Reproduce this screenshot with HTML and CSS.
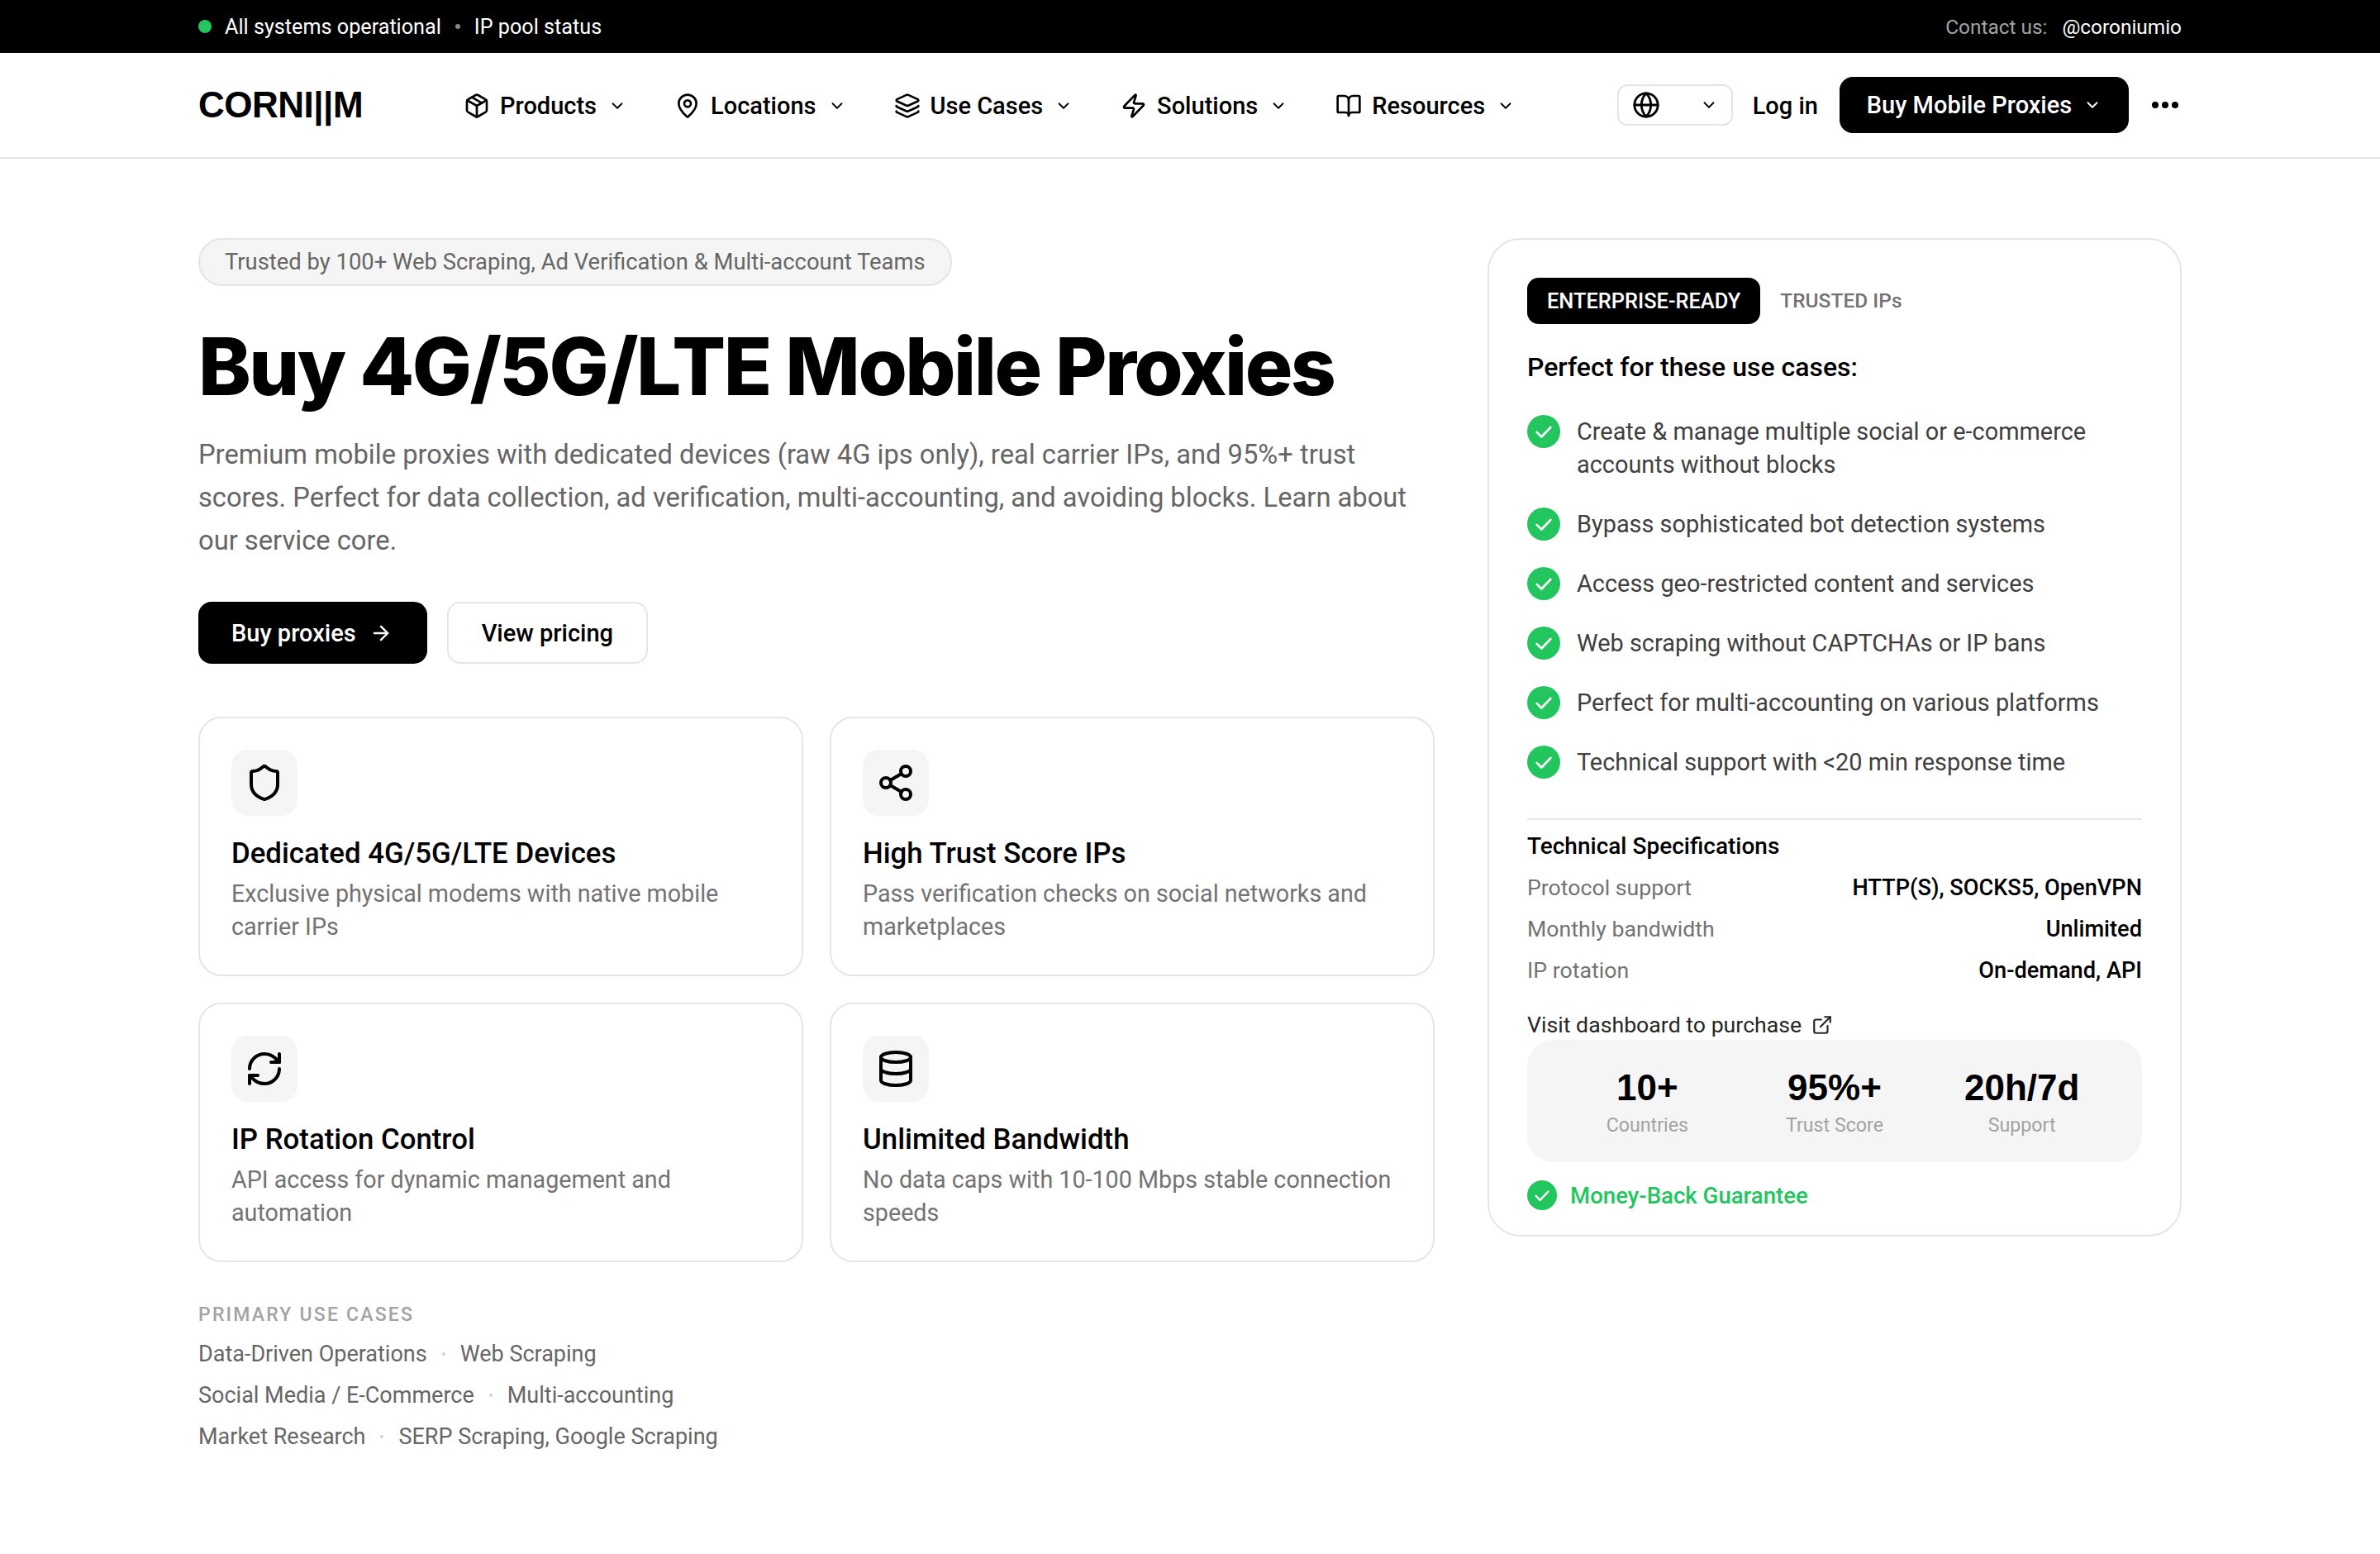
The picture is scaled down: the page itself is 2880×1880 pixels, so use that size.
FILE: index.html
```html
<!DOCTYPE html>
<html lang="en">
<head>
    <meta charset="UTF-8">
    <meta name="viewport" content="width=device-width, initial-scale=1.0">
    <title>Buy 4G/5G/LTE Mobile Proxies</title>
    <link rel="stylesheet" href="styles.css">
</head>
<body>
    <svg class="sprite" xmlns="http://www.w3.org/2000/svg">
        <symbol id="i-chevron" viewBox="0 0 24 24"><path d="m6 9 6 6 6-6"/></symbol>
        <symbol id="i-package" viewBox="0 0 24 24"><path d="M11 21.73a2 2 0 0 0 2 0l7-4A2 2 0 0 0 21 16V8a2 2 0 0 0-1-1.73l-7-4a2 2 0 0 0-2 0l-7 4A2 2 0 0 0 3 8v8a2 2 0 0 0 1 1.73z"/><path d="M12 22V12"/><path d="m3.3 7 8.7 5 8.7-5"/><path d="m7.5 4.27 9 5.15"/></symbol>
        <symbol id="i-pin" viewBox="0 0 24 24"><path d="M20 10c0 4.99-5.54 10.19-7.4 11.8a1 1 0 0 1-1.2 0C9.54 20.19 4 14.99 4 10a8 8 0 0 1 16 0"/><circle cx="12" cy="10" r="3"/></symbol>
        <symbol id="i-layers" viewBox="0 0 24 24"><path d="M12.83 2.18a2 2 0 0 0-1.66 0L2.6 6.08a1 1 0 0 0 0 1.83l8.58 3.91a2 2 0 0 0 1.66 0l8.58-3.9a1 1 0 0 0 0-1.83z"/><path d="M2 12a1 1 0 0 0 .58.91l8.6 3.91a2 2 0 0 0 1.65 0l8.58-3.9A1 1 0 0 0 22 12"/><path d="M2 17a1 1 0 0 0 .58.91l8.6 3.91a2 2 0 0 0 1.65 0l8.58-3.9A1 1 0 0 0 22 17"/></symbol>
        <symbol id="i-zap" viewBox="0 0 24 24"><path d="M4 14a1 1 0 0 1-.78-1.63l9.9-10.2a.5.5 0 0 1 .86.46l-1.92 6.02A1 1 0 0 0 13 10h7a1 1 0 0 1 .78 1.63l-9.9 10.2a.5.5 0 0 1-.86-.46l1.92-6.02A1 1 0 0 0 11 14z"/></symbol>
        <symbol id="i-book" viewBox="0 0 24 24"><path d="M12 7v14"/><path d="M3 18a1 1 0 0 1-1-1V4a1 1 0 0 1 1-1h5a4 4 0 0 1 4 4 4 4 0 0 1 4-4h5a1 1 0 0 1 1 1v13a1 1 0 0 1-1 1h-6a3 3 0 0 0-3 3 3 3 0 0 0-3-3z"/></symbol>
        <symbol id="i-globe" viewBox="0 0 24 24"><circle cx="12" cy="12" r="10"/><path d="M12 2a14.5 14.5 0 0 0 0 20 14.5 14.5 0 0 0 0-20"/><path d="M2 12h20"/></symbol>
        <symbol id="i-arrow" viewBox="0 0 24 24"><path d="M5 12h14"/><path d="m12 5 7 7-7 7"/></symbol>
        <symbol id="i-shield" viewBox="0 0 24 24"><path d="M20 13c0 5-3.5 7.5-7.66 8.95a1 1 0 0 1-.67-.01C7.5 20.5 4 18 4 13V6a1 1 0 0 1 1-1c2 0 4.5-1.2 6.24-2.72a1.17 1.17 0 0 1 1.52 0C14.51 3.81 17 5 19 5a1 1 0 0 1 1 1z"/></symbol>
        <symbol id="i-share" viewBox="0 0 24 24"><circle cx="18" cy="5" r="3"/><circle cx="6" cy="12" r="3"/><circle cx="18" cy="19" r="3"/><path d="m8.59 13.51 6.83 3.98"/><path d="m15.41 6.51-6.82 3.98"/></symbol>
        <symbol id="i-refresh" viewBox="0 0 24 24"><path d="M3 12a9 9 0 0 1 9-9 9.75 9.75 0 0 1 6.74 2.74L21 8"/><path d="M21 3v5h-5"/><path d="M21 12a9 9 0 0 1-9 9 9.75 9.75 0 0 1-6.74-2.74L3 16"/><path d="M8 16H3v5"/></symbol>
        <symbol id="i-database" viewBox="0 0 24 24"><ellipse cx="12" cy="5" rx="9" ry="3"/><path d="M3 5v14a9 3 0 0 0 18 0V5"/><path d="M3 12a9 3 0 0 0 18 0"/></symbol>
        <symbol id="i-external" viewBox="0 0 24 24"><path d="M15 3h6v6"/><path d="M10 14 21 3"/><path d="M18 13v6a2 2 0 0 1-2 2H5a2 2 0 0 1-2-2V8a2 2 0 0 1 2-2h6"/></symbol>
        <symbol id="i-check" viewBox="0 0 24 24"><circle class="check-bg" cx="12" cy="12" r="12"/><path class="check-mark" d="m7 12.5 3.4 3.4L17 9"/></symbol>
    </svg>

    <div class="topbar">
        <div class="wrap topbar-row">
            <div class="status">
                <span class="status-dot"></span>
                <span>All systems operational</span>
                <span class="status-sep"></span>
                <span>IP pool status</span>
            </div>
            <div class="contact"><span class="contact-label">Contact us:</span><span>@coroniumio</span></div>
        </div>
    </div>

    <header class="nav">
        <div class="wrap nav-row">
            <a class="logo">CORNI||M</a>
            <nav class="menu">
                <a class="menu-item"><svg class="icon"><use href="#i-package"/></svg>Products<svg class="chev"><use href="#i-chevron"/></svg></a>
                <a class="menu-item"><svg class="icon"><use href="#i-pin"/></svg>Locations<svg class="chev"><use href="#i-chevron"/></svg></a>
                <a class="menu-item"><svg class="icon"><use href="#i-layers"/></svg>Use Cases<svg class="chev"><use href="#i-chevron"/></svg></a>
                <a class="menu-item"><svg class="icon"><use href="#i-zap"/></svg>Solutions<svg class="chev"><use href="#i-chevron"/></svg></a>
                <a class="menu-item"><svg class="icon"><use href="#i-book"/></svg>Resources<svg class="chev"><use href="#i-chevron"/></svg></a>
            </nav>
            <div class="nav-right">
                <div class="lang"><svg class="icon"><use href="#i-globe"/></svg><svg class="chev"><use href="#i-chevron"/></svg></div>
                <a class="login">Log in</a>
                <a class="buy-btn">Buy Mobile Proxies<svg class="chev"><use href="#i-chevron"/></svg></a>
                <div class="dots"><span></span><span></span><span></span></div>
            </div>
        </div>
    </header>

    <main class="wrap layout">
        <section class="hero">
            <div class="badge">Trusted by 100+ Web Scraping, Ad Verification &amp; Multi-account Teams</div>
            <h1>Buy 4G/5G/LTE Mobile Proxies</h1>
            <p class="lead">Premium mobile proxies with dedicated devices (raw 4G ips only), real carrier IPs, and 95%+ trust scores. Perfect for data collection, ad verification, multi-accounting, and avoiding blocks. Learn about our service core.</p>
            <div class="actions">
                <a class="btn btn-dark">Buy proxies<svg class="btn-arrow"><use href="#i-arrow"/></svg></a>
                <a class="btn btn-light">View pricing</a>
            </div>

            <div class="features">
                <article class="feature">
                    <div class="feature-icon"><svg><use href="#i-shield"/></svg></div>
                    <h3>Dedicated 4G/5G/LTE Devices</h3>
                    <p>Exclusive physical modems with native mobile carrier IPs</p>
                </article>
                <article class="feature">
                    <div class="feature-icon"><svg><use href="#i-share"/></svg></div>
                    <h3>High Trust Score IPs</h3>
                    <p>Pass verification checks on social networks and marketplaces</p>
                </article>
                <article class="feature">
                    <div class="feature-icon"><svg><use href="#i-refresh"/></svg></div>
                    <h3>IP Rotation Control</h3>
                    <p>API access for dynamic management and automation</p>
                </article>
                <article class="feature">
                    <div class="feature-icon"><svg><use href="#i-database"/></svg></div>
                    <h3>Unlimited Bandwidth</h3>
                    <p>No data caps with 10-100 Mbps stable connection speeds</p>
                </article>
            </div>

            <div class="primary">
                <div class="primary-title">PRIMARY USE CASES</div>
                <div class="primary-row"><span>Data-Driven Operations</span><i></i><span>Web Scraping</span></div>
                <div class="primary-row"><span>Social Media / E-Commerce</span><i></i><span>Multi-accounting</span></div>
                <div class="primary-row"><span>Market Research</span><i></i><span>SERP Scraping, Google Scraping</span></div>
            </div>
        </section>

        <aside class="panel">
            <div class="tabs">
                <span class="tab tab-active">ENTERPRISE-READY</span>
                <span class="tab">TRUSTED IPs</span>
            </div>
            <h2>Perfect for these use cases:</h2>
            <ul class="checks">
                <li><svg class="check"><use href="#i-check"/></svg><span>Create &amp; manage multiple social or e-commerce accounts without blocks</span></li>
                <li><svg class="check"><use href="#i-check"/></svg><span>Bypass sophisticated bot detection systems</span></li>
                <li><svg class="check"><use href="#i-check"/></svg><span>Access geo-restricted content and services</span></li>
                <li><svg class="check"><use href="#i-check"/></svg><span>Web scraping without CAPTCHAs or IP bans</span></li>
                <li><svg class="check"><use href="#i-check"/></svg><span>Perfect for multi-accounting on various platforms</span></li>
                <li><svg class="check"><use href="#i-check"/></svg><span>Technical support with &lt;20 min response time</span></li>
            </ul>
            <div class="specs">
                <h4>Technical Specifications</h4>
                <div class="spec"><span>Protocol support</span><strong>HTTP(S), SOCKS5, OpenVPN</strong></div>
                <div class="spec"><span>Monthly bandwidth</span><strong>Unlimited</strong></div>
                <div class="spec"><span>IP rotation</span><strong>On-demand, API</strong></div>
            </div>
            <a class="dash-link">Visit dashboard to purchase<svg><use href="#i-external"/></svg></a>
            <div class="stats">
                <div class="stat"><b>10+</b><span>Countries</span></div>
                <div class="stat"><b>95%+</b><span>Trust Score</span></div>
                <div class="stat"><b>20h/7d</b><span>Support</span></div>
            </div>
            <div class="guarantee"><svg class="check"><use href="#i-check"/></svg>Money-Back Guarantee</div>
        </aside>
    </main>
</body>
</html>
```

FILE: styles.css
```css
* {
    box-sizing: border-box;
}

body {
    margin: 0;
    font-family: Roboto, "Liberation Sans", sans-serif;
    color: #000;
    background: #fff;
}

.sprite {
    display: none;
}

svg {
    fill: none;
    stroke: currentColor;
    stroke-linecap: round;
    stroke-linejoin: round;
    stroke-width: 2;
}

.wrap {
    width: 2400px;
    margin: 0 auto;
}

/* top strip */
.topbar {
    height: 64px;
    background: #000;
    color: #fff;
    font-size: 25.2px;
}

.topbar-row {
    height: 100%;
    display: flex;
    align-items: center;
    justify-content: space-between;
}

.status {
    display: flex;
    align-items: center;
}

.status-dot {
    width: 16px;
    height: 16px;
    margin-right: 16px;
    border-radius: 50%;
    background: #22c55e;
}

.status-sep {
    width: 6px;
    height: 6px;
    margin: 0 17px;
    border-radius: 50%;
    background: #8a8a8a;
}

.contact {
    font-size: 24.4px;
}

.contact-label {
    margin-right: 18px;
    color: #a3a3a3;
}

/* main nav */
.nav {
    height: 128px;
    border-bottom: 2px solid #e5e5e5;
}

.nav-row {
    height: 100%;
    display: flex;
    align-items: center;
}

.logo {
    width: 321px;
    font-family: "Liberation Sans", sans-serif;
    font-size: 44px;
    font-weight: 700;
    letter-spacing: -0.5px;
}

.menu {
    margin-top: 2px;
    display: flex;
    gap: 58px;
}

.menu-item {
    display: flex;
    align-items: center;
    font-size: 29px;
    font-weight: 500;
    white-space: nowrap;
}

.icon {
    width: 32px;
    height: 32px;
    margin-right: 12px;
}

.chev {
    width: 22px;
    height: 22px;
    margin-left: 14px;
}

.nav-right {
    margin-left: auto;
    margin-right: 4px;
    display: flex;
    align-items: center;
}

.lang {
    width: 140px;
    height: 50px;
    padding: 0 16px;
    display: flex;
    align-items: center;
    justify-content: space-between;
    border: 2px solid #e5e5e5;
    border-radius: 12px;
}

.lang .icon {
    width: 34px;
    height: 34px;
    margin: 0;
}

.lang .chev {
    margin: 0;
}

.login {
    margin: 2px 26px 0 24px;
    font-size: 29px;
    font-weight: 500;
}

.buy-btn {
    width: 350px;
    height: 68px;
    display: flex;
    align-items: center;
    justify-content: center;
    background: #000;
    color: #fff;
    border-radius: 16px;
    font-size: 29px;
    font-weight: 500;
}

.dots {
    margin-left: 28px;
    width: 32px;
    display: flex;
    justify-content: space-between;
}

.dots span {
    width: 8px;
    height: 8px;
    border-radius: 50%;
    background: #000;
}

/* page layout */
.layout {
    display: grid;
    grid-template-columns: 1496px 840px;
    gap: 64px;
    align-items: start;
    padding-top: 96px;
}

.badge {
    display: inline-block;
    height: 58px;
    padding: 0 30px;
    line-height: 54px;
    border: 2px solid #e5e5e5;
    border-radius: 29px;
    background: #f5f5f5;
    color: #666;
    font-size: 27.4px;
}

h1 {
    margin: 41px 0 0;
    font-family: Inter, "Liberation Sans", sans-serif;
    font-size: 96px;
    line-height: 112px;
    font-weight: 800;
    letter-spacing: -2.5px;
}

.lead {
    margin: 25px 0 0;
    font-size: 32.7px;
    line-height: 52px;
    color: #666;
}

.actions {
    margin-top: 48px;
    display: flex;
    gap: 24px;
}

.btn {
    height: 75px;
    padding: 0 40px;
    display: flex;
    align-items: center;
    border-radius: 16px;
    font-size: 29px;
    font-weight: 500;
}

.btn-dark {
    padding-right: 42px;
    background: #000;
    color: #fff;
}

.btn-arrow {
    width: 28px;
    height: 28px;
    margin-left: 16px;
}

.btn-light {
    border: 2px solid #e5e5e5;
}

/* feature cards */
.features {
    margin-top: 64px;
    display: grid;
    grid-template-columns: 1fr 1fr;
    gap: 32px;
}

.feature {
    height: 314px;
    padding: 38px;
    border: 2px solid #e5e5e5;
    border-radius: 28px;
}

.feature-icon {
    width: 80px;
    height: 80px;
    display: flex;
    align-items: center;
    justify-content: center;
    background: #f5f5f5;
    border-radius: 20px;
}

.feature-icon svg {
    width: 48px;
    height: 48px;
}

.feature h3 {
    margin: 23px 0 0;
    font-size: 34.8px;
    line-height: 44px;
    font-weight: 500;
}

.feature p {
    margin: 7px 0 0;
    font-size: 28.7px;
    line-height: 40px;
    color: #737373;
}

/* use case list under the cards */
.primary {
    margin-top: 50px;
}

.primary-title {
    font-size: 23px;
    line-height: 28px;
    font-weight: 500;
    letter-spacing: 2.2px;
    color: #a3a3a3;
}

.primary-row {
    margin-top: 16px;
    height: 34px;
    display: flex;
    align-items: center;
    font-size: 27px;
    color: #666;
}

.primary-row i {
    width: 4px;
    height: 4px;
    margin: 0 18px;
    border-radius: 50%;
    background: #d4d4d4;
}

/* right panel */
.panel {
    padding: 46px 46px 30px;
    border: 2px solid #e5e5e5;
    border-radius: 40px;
}

.tabs {
    display: flex;
    align-items: center;
}

.tab {
    height: 56px;
    padding: 0 24px;
    line-height: 56px;
    font-size: 24.5px;
    font-weight: 500;
    color: #737373;
}

.tab-active {
    background: #000;
    color: #fff;
    border-radius: 14px;
    font-size: 25.4px;
}

.panel h2 {
    margin: 32px 0 0;
    font-size: 32px;
    line-height: 40px;
    font-weight: 500;
}

.checks {
    margin: 38px 0 0;
    padding: 0;
    list-style: none;
    display: flex;
    flex-direction: column;
    gap: 32px;
}

.checks li {
    display: flex;
    gap: 20px;
    font-size: 28.9px;
    line-height: 40px;
    color: #404040;
}

.check {
    flex: none;
    width: 40px;
    height: 40px;
}

.check-bg {
    fill: #22c55e;
    stroke: none;
}

.check-mark {
    stroke: #fff;
    stroke-width: 1.6;
}

.specs {
    margin-top: 48px;
    padding-top: 16px;
    border-top: 2px solid #e5e5e5;
}

.specs h4 {
    margin: 0;
    font-size: 28px;
    line-height: 32px;
    font-weight: 500;
}

.spec {
    margin-top: 18px;
    display: flex;
    justify-content: space-between;
    font-size: 26.7px;
    line-height: 32px;
    color: #737373;
}

.spec strong {
    font-size: 27.2px;
    font-weight: 500;
    color: #000;
}

.dash-link {
    margin-top: 34px;
    padding-bottom: 2px;
    display: flex;
    align-items: center;
    font-size: 26.7px;
    line-height: 32px;
    font-weight: 400;
    color: #262626;
}

.dash-link svg {
    width: 26px;
    height: 26px;
    margin-left: 12px;
}

.stats {
    height: 148px;
    padding: 0 32px;
    display: grid;
    grid-template-columns: repeat(3, 1fr);
    align-items: center;
    background: #f5f5f5;
    border-radius: 32px;
}

.stat {
    text-align: center;
}

.stat b {
    display: block;
    padding-top: 2px;
    font-family: "Liberation Sans", sans-serif;
    font-size: 44px;
    line-height: 52px;
    font-weight: 700;
}

.stat span {
    display: block;
    margin-top: 4px;
    font-size: 23.2px;
    line-height: 30px;
    color: #a3a3a3;
}

.guarantee {
    margin-top: 22px;
    display: flex;
    align-items: center;
    gap: 16px;
    font-size: 27.6px;
    font-weight: 500;
    color: #22c55e;
}

.guarantee .check {
    width: 36px;
    height: 36px;
}
```
